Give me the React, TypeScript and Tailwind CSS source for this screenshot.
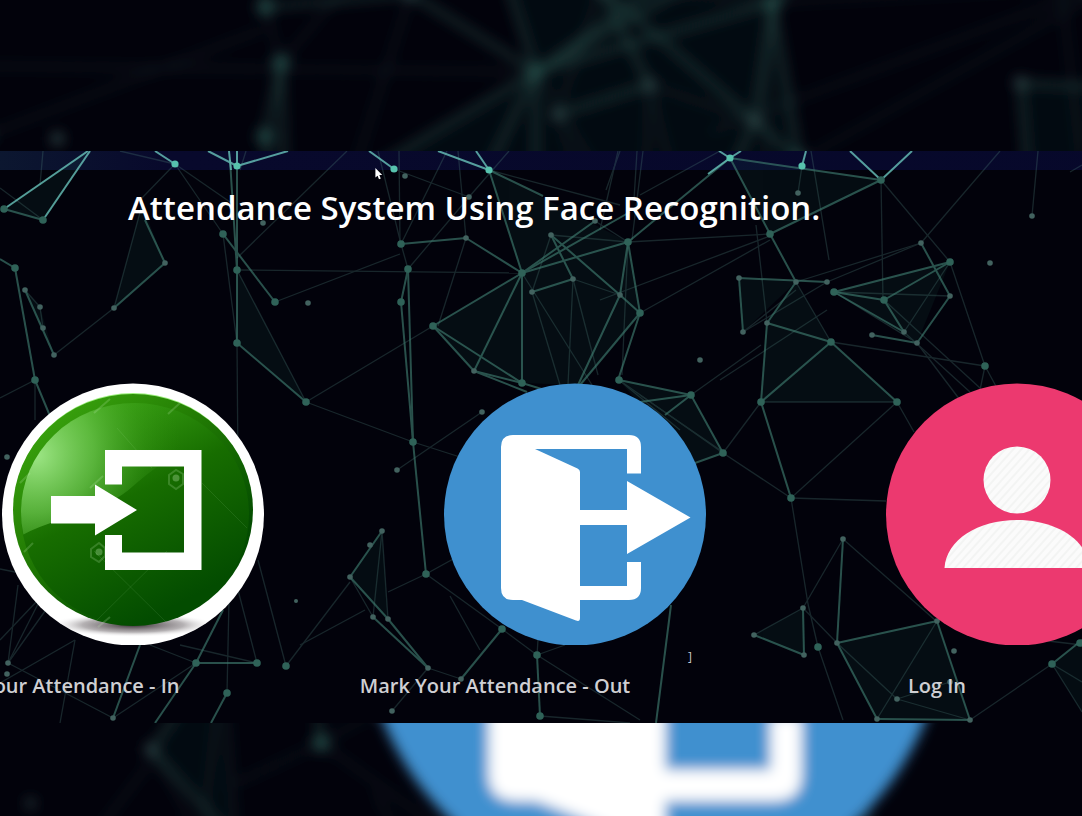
import React from "react";

type Point = [number, number];
type Edge = [number, number, number, number];

const BRIGHT: Edge[] = [
  [155, 151, 175, 164], [208, 151, 237, 166], [288, 151, 237, 166], [369, 151, 394, 169],
  [438, 151, 489, 170], [476, 151, 489, 170], [719, 151, 730, 158], [741, 151, 730, 158],
  [730, 158, 708, 174], [806, 151, 802, 166], [850, 151, 881, 180], [912, 151, 881, 180],
  [4, 209, 88, 151], [43, 220, 90, 151], [229, 151, 231, 170], [237, 151, 237, 166],
];

const STRONG: Edge[] = [
  [4, 209, 43, 220], [0, 259, 15, 268], [15, 268, 35, 380], [35, 380, 50, 416],
  [25, 290, 54, 355], [165, 263, 114, 308], [145, 220, 165, 263],
  [237, 166, 237, 270], [237, 270, 237, 343], [230, 160, 237, 270], [223, 234, 275, 302],
  [237, 343, 306, 402], [489, 170, 543, 196], [489, 170, 522, 273], [401, 244, 466, 238],
  [466, 238, 522, 273], [522, 273, 433, 326], [522, 273, 522, 383], [522, 273, 474, 371],
  [522, 273, 595, 221], [522, 273, 628, 242], [522, 273, 630, 212], [551, 235, 573, 279],
  [551, 235, 620, 295], [532, 292, 573, 279], [628, 242, 640, 313], [628, 242, 620, 295],
  [628, 242, 730, 158], [620, 295, 640, 313], [433, 326, 474, 371], [433, 326, 522, 383],
  [474, 371, 522, 383], [474, 371, 527, 392], [522, 383, 545, 390], [640, 313, 580, 385],
  [640, 313, 618, 380], [620, 295, 578, 385], [619, 380, 691, 395], [691, 395, 723, 453],
  [691, 395, 640, 402], [691, 395, 665, 415], [723, 453, 695, 463], [408, 269, 401, 302],
  [401, 302, 413, 442], [413, 442, 426, 574], [408, 269, 413, 442],
  [730, 158, 770, 234], [730, 158, 881, 180], [881, 180, 770, 234], [770, 234, 796, 282],
  [767, 323, 831, 342], [796, 282, 767, 323], [831, 342, 761, 402], [831, 342, 897, 402],
  [761, 402, 791, 498], [767, 323, 761, 402], [739, 278, 743, 332], [739, 278, 827, 282],
  [921, 243, 950, 296], [950, 296, 917, 343], [950, 262, 834, 292], [950, 262, 884, 300],
  [834, 292, 884, 300], [834, 292, 904, 332], [884, 300, 904, 332], [872, 335, 917, 343],
  [196, 663, 257, 663], [196, 663, 223, 610], [196, 663, 155, 723], [227, 693, 211, 723],
  [113, 718, 140, 645], [382, 531, 350, 577], [350, 577, 388, 619], [373, 617, 428, 668],
  [388, 619, 428, 668], [461, 679, 502, 629], [537, 655, 540, 716], [671, 605, 656, 723],
  [837, 643, 937, 621], [837, 643, 877, 719], [937, 621, 970, 720], [877, 719, 970, 720],
  [754, 635, 804, 655], [803, 608, 804, 655], [843, 539, 837, 643], [1052, 664, 1082, 640],
];

const FAINT: Edge[] = [
  [0, 188, 43, 220], [43, 151, 40, 185], [120, 151, 175, 164], [175, 164, 140, 200],
  [175, 164, 230, 202], [175, 164, 223, 234], [142, 205, 114, 308], [114, 308, 54, 355],
  [25, 290, 40, 307], [40, 307, 43, 328], [35, 380, 35, 420], [0, 398, 35, 380],
  [223, 234, 237, 343], [237, 270, 306, 402], [237, 343, 238, 470], [246, 151, 240, 170],
  [347, 151, 237, 258], [275, 302, 400, 254], [237, 270, 522, 273], [306, 402, 433, 326],
  [306, 402, 413, 442], [413, 442, 460, 457], [482, 412, 397, 470], [378, 151, 401, 244],
  [399, 151, 400, 244], [447, 151, 401, 244], [458, 151, 466, 238], [394, 169, 469, 197],
  [469, 197, 408, 269], [509, 151, 469, 197], [401, 244, 408, 269], [466, 238, 438, 326],
  [489, 170, 620, 205], [551, 235, 532, 292], [551, 235, 628, 242], [595, 221, 628, 242],
  [573, 279, 620, 295], [532, 292, 560, 385], [522, 273, 592, 385], [573, 279, 568, 385],
  [573, 279, 598, 375], [628, 242, 622, 375], [628, 242, 770, 234], [640, 313, 770, 240],
  [600, 300, 770, 236], [618, 151, 600, 230], [620, 151, 606, 190], [643, 151, 632, 240],
  [637, 151, 634, 200], [720, 151, 640, 195], [619, 380, 723, 453], [619, 380, 680, 430],
  [691, 395, 761, 345], [723, 453, 761, 402], [723, 453, 791, 498], [640, 395, 720, 450],
  [802, 166, 798, 193], [811, 151, 829, 260], [881, 180, 883, 300], [881, 180, 950, 262],
  [756, 225, 767, 323], [796, 282, 831, 342], [743, 332, 827, 282], [743, 332, 796, 290],
  [827, 282, 921, 243], [796, 282, 921, 243], [921, 243, 1000, 151], [831, 342, 985, 366],
  [761, 402, 897, 402], [791, 498, 897, 402], [791, 498, 886, 501], [897, 402, 914, 432],
  [834, 292, 917, 343], [834, 292, 950, 296], [950, 262, 904, 332], [950, 262, 985, 366],
  [904, 332, 970, 392], [884, 300, 980, 388], [917, 343, 960, 400], [985, 366, 998, 390],
  [985, 366, 980, 390], [1038, 151, 1032, 216], [1082, 165, 1070, 172], [720, 380, 827, 310],
  [791, 498, 808, 604], [8, 663, 40, 600], [8, 663, 60, 590], [0, 569, 20, 573],
  [8, 663, 18, 585], [0, 640, 38, 600], [8, 663, 113, 718], [0, 683, 75, 640],
  [196, 663, 150, 645], [257, 663, 180, 645], [227, 693, 229, 600], [257, 663, 238, 590],
  [286, 666, 258, 560], [286, 666, 350, 582], [113, 718, 196, 663], [60, 723, 75, 640],
  [300, 645, 365, 610], [382, 531, 373, 617], [382, 531, 388, 619], [350, 577, 373, 617],
  [428, 668, 461, 679], [426, 574, 502, 629], [426, 574, 455, 558], [388, 592, 426, 574],
  [502, 629, 537, 655], [537, 655, 640, 720], [537, 655, 565, 645], [428, 668, 392, 711],
  [537, 655, 538, 640], [540, 716, 630, 723], [450, 596, 480, 650], [843, 539, 803, 608],
  [843, 539, 935, 620], [803, 608, 754, 635], [803, 608, 837, 643], [818, 647, 808, 604],
  [818, 647, 843, 720], [937, 621, 877, 719], [897, 699, 970, 720], [897, 699, 950, 682],
  [837, 643, 897, 699], [1052, 664, 970, 720], [1052, 664, 1082, 712], [1052, 664, 1082, 682],
  [1040, 640, 1082, 645],
];

const NODES: Point[] = [
  [4, 209], [43, 220], [15, 268], [35, 380], [237, 270], [237, 343], [306, 402], [223, 234],
  [275, 302], [408, 269], [401, 302], [433, 326], [522, 273], [628, 242], [640, 313],
  [522, 383], [619, 380], [691, 395], [723, 453], [413, 442], [426, 574], [770, 234],
  [881, 180], [831, 342], [761, 402], [897, 402], [791, 498], [834, 292], [884, 300],
  [950, 262], [985, 366], [196, 663], [257, 663], [227, 693], [286, 666], [537, 655],
  [502, 629], [540, 716], [818, 647], [1052, 664], [1080, 643], [401, 244],
];

const DOTS: Point[] = [
  [165, 263], [114, 308], [25, 290], [40, 307], [43, 328], [54, 355], [263, 223], [308, 303],
  [405, 176], [469, 197], [466, 238], [551, 235], [573, 279], [532, 292], [620, 295],
  [474, 371], [595, 221], [482, 412], [397, 470], [700, 360], [798, 193], [739, 278],
  [796, 282], [827, 282], [743, 332], [767, 323], [921, 243], [950, 296], [917, 343],
  [904, 332], [872, 335], [990, 263], [1032, 216], [8, 663], [7, 674], [7, 457], [113, 718],
  [382, 531], [370, 545], [350, 577], [373, 617], [388, 619], [428, 668],
  [461, 679], [392, 711], [843, 539], [803, 608], [754, 635], [804, 655], [837, 643],
  [937, 621], [877, 719], [970, 720], [897, 699], [954, 651], [950, 682],
];

const GLOWS: Point[] = [[175, 164], [237, 166], [394, 169], [489, 170], [730, 158], [802, 166]];

const FACES = [
  "4,209 88,151 43,220", "142,205 165,263 114,308", "25,290 40,307 54,355",
  "237,270 237,343 306,402", "522,273 433,326 474,371 522,383", "522,273 628,242 640,313 580,385 522,383",
  "489,170 628,242 522,273", "619,380 691,395 723,453 690,463", "730,158 881,180 770,234",
  "739,278 796,282 743,332", "796,282 767,323 761,402 831,342", "834,292 950,262 917,343",
  "831,342 761,402 897,402", "382,531 350,577 388,619", "803,608 754,635 804,655",
  "837,643 937,621 970,720 877,719", "1052,664 1082,640 1082,712",
];

function Lines({ edges, stroke, width, opacity }: { edges: Edge[]; stroke: string; width: number; opacity: number }) {
  return (
    <g stroke={stroke} strokeWidth={width} opacity={opacity}>
      {edges.map(([x1, y1, x2, y2], i) => (
        <line key={i} x1={x1} y1={y1} x2={x2} y2={y2} />
      ))}
    </g>
  );
}

function Network() {
  return (
    <g>
      <g fill="#1f6b5c" opacity="0.1">
        {FACES.map((points) => (
          <polygon key={points} points={points} />
        ))}
      </g>
      <Lines edges={FAINT} stroke="#4b7a75" width={1.3} opacity={0.3} />
      <Lines edges={STRONG} stroke="#3f7d70" width={2} opacity={0.64} />
      <Lines edges={BRIGHT} stroke="#69c4bb" width={2} opacity={0.8} />
      <g fill="#2f6258">
        {NODES.map(([x, y]) => (
          <circle key={`${x}-${y}`} cx={x} cy={y} r="3.8" />
        ))}
      </g>
      <g fill="#42625f">
        {DOTS.map(([x, y]) => (
          <circle key={`${x}-${y}`} cx={x} cy={y} r="2.8" />
        ))}
        <circle cx="296" cy="601" r="2" />
      </g>
      <g fill="#57c2ad">
        {GLOWS.map(([x, y]) => (
          <circle key={`${x}-${y}`} cx={x} cy={y} r="3.6" />
        ))}
      </g>
    </g>
  );
}

function ExitShape() {
  return (
    <g>
      <circle cx="131" cy="131.5" r="131" fill="#3f90cf" />
      <path
        d="M69 52 H185 Q197 52 197 64 V90.500 H183 V66 H91 L133.500 85.500 Q136 86.500 136 89 V127 H183 V98 L246.500 134.500 L183 171 V142 H136 V203 H183 V179 H197 V205 Q197 217 185 217 H136 V235 Q136 239 132 237.500 L78 217 H69 Q57 217 57 205 V64 Q57 52 69 52 Z"
        fill="#fff"
      />
    </g>
  );
}

function EnterIcon() {
  return (
    <svg viewBox="0 0 262 262" className="block size-full" aria-hidden="true">
      <defs>
        <linearGradient id="leaf" x1="0.25" y1="0.05" x2="0.7" y2="0.9">
          <stop offset="0" stopColor="#3aa313" />
          <stop offset="0.45" stopColor="#176d00" />
          <stop offset="1" stopColor="#034c00" />
        </linearGradient>
        <linearGradient id="rim" x1="0.1" y1="0.1" x2="0.7" y2="0.8">
          <stop offset="0" stopColor="#3aa40e" />
          <stop offset="0.45" stopColor="#237d04" />
          <stop offset="1" stopColor="#034c00" />
        </linearGradient>
        <radialGradient id="gloss" gradientUnits="userSpaceOnUse" cx="34" cy="72" r="145">
          <stop offset="0" stopColor="#a9ee93" stopOpacity="0.9" />
          <stop offset="0.4" stopColor="#74cc56" stopOpacity="0.65" />
          <stop offset="0.75" stopColor="#45a524" stopOpacity="0.25" />
          <stop offset="1" stopColor="#2f8f10" stopOpacity="0" />
        </radialGradient>
        <radialGradient id="ground">
          <stop offset="0" stopColor="#2c2228" stopOpacity="0.95" />
          <stop offset="0.6" stopColor="#6b6468" stopOpacity="0.5" />
          <stop offset="1" stopColor="#fff" stopOpacity="0" />
        </radialGradient>
        <clipPath id="disc">
          <circle cx="131" cy="131.5" r="131" />
        </clipPath>
        <clipPath id="ball">
          <ellipse cx="132" cy="129" rx="113" ry="109" />
        </clipPath>
      </defs>
      <circle cx="131" cy="131.5" r="131" fill="#fff" />
      <ellipse cx="131" cy="242" rx="84" ry="12" fill="url(#ground)" clipPath="url(#disc)" />
      <ellipse cx="131" cy="126" rx="119" ry="116" fill="#9df07e" />
      <ellipse cx="131" cy="127" rx="120" ry="116" fill="url(#rim)" />
      <ellipse cx="133" cy="131" rx="114" ry="111" fill="url(#leaf)" />
      <path
        d="M10 158 V0 H230 V50 C190 58 160 78 130 104 C96 134 50 132 10 158 Z"
        fill="url(#gloss)"
        clipPath="url(#ball)"
      />
      <g stroke="#c9f2bd" strokeWidth="1" opacity="0.1" fill="none">
        <path d="M92 168 L165 240 M165 168 L92 240 M200 100 L245 145 M115 45 L150 85" />
      </g>
      <g stroke="#c9f2bd" strokeWidth="2" opacity="0.2" fill="none">
        <path d="M167 92 L174 87 L181 91 V101 L174 106 L167 101 Z" />
        <path d="M89 166 L97 160 L103 165 V173 L97 179 L89 174 Z" />
        <path d="M92 30 L108 16 M166 31 L178 20 M18 100 L28 90 M22 169 L31 160 M96 244 L108 234 M88 105 L101 93" />
      </g>
      <circle cx="174" cy="95" r="3.500" fill="#c9f2bd" opacity="0.3" />
      <circle cx="97" cy="169" r="3.500" fill="#c9f2bd" opacity="0.3" />
      <path d="M103 67 H199.500 V187 H103 V152 H120 V169.500 H182 V83.500 H120 V101.500 H103 Z" fill="#fff" />
      <path d="M49 113 H93 V101.500 L135 127 L93 152.500 V140.500 H49 Z" fill="#fff" />
    </svg>
  );
}

function ExitIcon() {
  return (
    <svg viewBox="0 0 262 262" className="block size-full" aria-hidden="true">
      <ExitShape />
    </svg>
  );
}

function PersonIcon() {
  return (
    <svg viewBox="0 0 262 262" className="block size-full" aria-hidden="true">
      <defs>
        <pattern id="stripes" width="6" height="6" patternUnits="userSpaceOnUse" patternTransform="rotate(42)">
          <rect width="6" height="6" fill="#fbfbfb" />
          <rect width="2" height="6" fill="#f3f4f3" />
        </pattern>
      </defs>
      <circle cx="131" cy="131.5" r="131" fill="#ec396f" />
      <circle cx="131" cy="97" r="33.500" fill="url(#stripes)" />
      <path d="M58.500 185 C60 157 92 137 131 137 C170 137 202 157 203.500 185 Z" fill="url(#stripes)" />
    </svg>
  );
}

function Backdrop() {
  return (
    <svg
      viewBox="0 0 1082 816"
      preserveAspectRatio="xMidYMid slice"
      className="absolute inset-0 size-full"
      aria-hidden="true"
    >
      <defs>
        <filter id="soft" filterUnits="userSpaceOnUse" x="-40" y="-40" width="1162" height="896">
          <feGaussianBlur stdDeviation="6.5" />
        </filter>
      </defs>
      <g filter="url(#soft)">
        <g transform="translate(-631 -537) scale(2.235 2.23)">
          <g opacity="0.75">
            <Network />
          </g>
          <g transform="translate(444 383)">
            <ExitShape />
          </g>
        </g>
      </g>
    </svg>
  );
}

interface Action {
  id: string;
  label: string;
  icon: React.ReactNode;
  note?: string;
}

const ACTIONS: Action[] = [
  { id: "mark-in", label: "Mark Your Attendance - In", icon: <EnterIcon /> },
  { id: "mark-out", label: "Mark Your Attendance - Out", icon: <ExitIcon />, note: "]" },
  { id: "log-in", label: "Log In", icon: <PersonIcon /> },
];

export default function App() {
  return (
    <main className="relative min-h-screen overflow-hidden bg-[#02020b] pt-[151px] pb-[93px] font-['Open_Sans','Noto_Sans',sans-serif]">
      <Backdrop />
      <section className="relative overflow-hidden bg-[#02020b] pb-[23px]">
        <svg
          viewBox="0 151 1082 572"
          preserveAspectRatio="xMidYMid slice"
          className="absolute inset-0 size-full"
          aria-hidden="true"
        >
          <defs>
            <linearGradient id="bar">
              <stop offset="0.24" stopColor="#0c1730" />
              <stop offset="0.32" stopColor="#08092c" />
              <stop offset="1" stopColor="#06082a" />
            </linearGradient>
          </defs>
          <rect x="-500" y="151" width="2082" height="19" fill="url(#bar)" />
          <Network />
        </svg>
        <svg viewBox="0 0 10 15" className="absolute top-4 left-[375px] h-[14px] w-2" aria-hidden="true">
          <path d="M0.500 0 V12 L3.200 9.600 L5 14 L7.200 13 L5.400 8.800 H9 Z" fill="#fff" />
        </svg>
        <div className="relative">
          <h1 className="pt-[33px] pl-32 text-[33px] leading-[48px] font-semibold whitespace-nowrap text-white">
            Attendance System Using Face Recognition.
          </h1>
          <div className="-ml-42 flex w-max pt-[151px]">
            {ACTIONS.map(({ id, label, icon, note }) => (
              <div key={id} className="relative flex w-[442px] flex-col">
                <button
                  type="button"
                  aria-labelledby={id}
                  className="mr-[10px] size-[262px] cursor-pointer self-end rounded-full"
                >
                  {icon}
                </button>
                {note && <span className="absolute top-[264px] right-6 text-xs leading-5 text-[#c8c8cc]">{note}</span>}
                <span id={id} className="mt-[27px] text-center text-xl leading-7 font-semibold text-[#cfcfd3]">
                  {label}
                </span>
              </div>
            ))}
          </div>
        </div>
      </section>
    </main>
  );
}
